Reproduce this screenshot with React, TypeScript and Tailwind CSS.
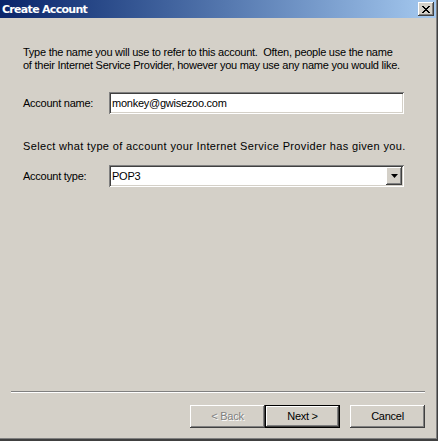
import React from "react";

const raised =
  "shadow-[inset_-1px_-1px_#404040,inset_1px_1px_#ffffff,inset_-2px_-2px_#808080,inset_2px_2px_#d4d0c8]";
const sunken =
  "shadow-[inset_1px_1px_#808080,inset_-1px_-1px_#ffffff,inset_2px_2px_#404040,inset_-2px_-2px_#d4d0c8]";

function Button({ children, disabled = false, isDefault = false }: { children: React.ReactNode; disabled?: boolean; isDefault?: boolean }) {
  const base = "w-[75px] h-[23px] flex items-center justify-center bg-[#d4d0c8] text-[11px]";
  if (isDefault) {
    return (
      <div className="w-[75px] h-[23px] border border-black">
        <div className={`w-full h-full flex items-center justify-center text-[11px] text-black shadow-[inset_-1px_-1px_#404040,inset_1px_1px_#ffffff,inset_-2px_-2px_#808080]`}>
          {children}
        </div>
      </div>
    );
  }
  return (
    <div className={`${base} ${raised} ${disabled ? "text-[#808080] [text-shadow:1px_1px_#ffffff]" : "text-black"}`}>
      {children}
    </div>
  );
}

export default function App() {
  return (
    <div
      className="w-[438px] h-[441px] bg-[#d4d0c8] border-r border-b-2 border-[#404040] overflow-hidden tracking-[-0.25px]"
      style={{ fontFamily: '"Liberation Sans", Arial, sans-serif' }}
    >
      <div className="w-full h-full flex flex-col border-r border-b border-[#808080]">
        {/* title bar */}
        <div className="h-[18px] flex items-center justify-between bg-linear-to-r from-[#0a246a] to-[#a6caf0] pl-[2px] pr-[2px]">
          <span
            className="text-white font-bold text-[11px] leading-none tracking-[-0.7px]"
            style={{ fontFamily: '"DejaVu Sans", Verdana, sans-serif' }}
          >
            Create Account
          </span>
          <div className={`w-[16px] h-[14px] bg-[#d4d0c8] flex items-center justify-center ${raised}`}>
            <svg width="8" height="7" viewBox="0 0 8 7">
              <path d="M0 0h2v1h1v1h2V1h1V0h2v1H7v1H6v1H5v1h1v1h1v1h1v1H6V6H5V5H3v1H2v1H0V6h1V5h1V4h1V3H2V2H1V1H0z" fill="#000" />
            </svg>
          </div>
        </div>

        {/* body */}
        <div className="pl-[23px] pt-[28px] w-[404px] text-[11px] leading-[13px] text-black">
          <p className="whitespace-nowrap">
            Type the name you will use to refer to this account.&nbsp; Often, people use the name
            <br />
            of their Internet Service Provider, however you may use any name you would like.
          </p>

          <div className="flex items-center mt-[20px]">
            <span className="w-[86px]">Account name:</span>
            <div className={`flex-1 h-[22px] bg-white flex items-center pl-[3px] ${sunken}`}>monkey@gwisezoo.com</div>
          </div>

          <p className="mt-[26px] whitespace-nowrap tracking-[0.35px]">
            Select what type of account your Internet Service Provider has given you.
          </p>

          <div className="flex items-center mt-[12px]">
            <span className="w-[86px]">Account type:</span>
            <div className={`flex-1 h-[22px] bg-white flex items-center justify-between pl-[3px] pr-[2px] ${sunken}`}>
              <span>POP3</span>
              <div className={`w-[16px] h-[18px] bg-[#d4d0c8] flex items-center justify-center ${raised}`}>
                <svg width="7" height="4" viewBox="0 0 7 4">
                  <path d="M0 0h7L3.5 4z" fill="#000" />
                </svg>
              </div>
            </div>
          </div>
        </div>

        <div className="flex-1" />

        {/* separator */}
        <div className="mx-[11px] border-t border-b border-t-[#808080] border-b-white" />

        {/* buttons */}
        <div className="flex justify-end pr-[11px] mt-[12px] mb-[10px]">
          <Button disabled>&lt; Back</Button>
          <Button isDefault>Next &gt;</Button>
          <div className="w-[10px]" />
          <Button>Cancel</Button>
        </div>
      </div>
    </div>
  );
}
